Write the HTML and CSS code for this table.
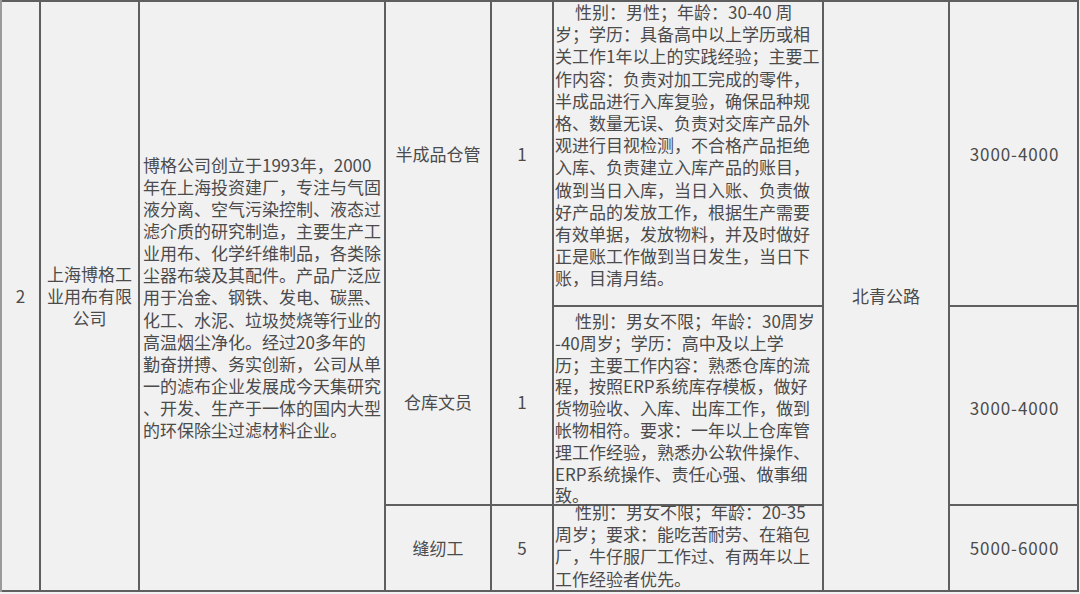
FILE: index.html
```html
<!DOCTYPE html>
<html lang="zh-CN">
<head>
<meta charset="utf-8">
<title>招聘信息</title>
<link rel="stylesheet" href="styles.css">
</head>
<body>
<div class="sheet">
  <div class="cell c-no span-all center">2</div>
  <div class="cell c-name span-all center">上海博格工<br>业用布有限<br>公司</div>
  <div class="cell c-intro span-all">
    <div class="intro">博格公司创立于1993年，2000<br>年在上海投资建厂，专注与气固<br>液分离、空气污染控制、液态过<br>滤介质的研究制造，主要生产工<br>业用布、化学纤维制品，各类除<br>尘器布袋及其配件。产品广泛应<br>用于冶金、钢铁、发电、碳黑、<br>化工、水泥、垃圾焚烧等行业的<br>高温烟尘净化。经过20多年的<br>勤奋拼搏、务实创新，公司从单<br>一的滤布企业发展成今天集研究<br>、开发、生产于一体的国内大型<br>的环保除尘过滤材料企业。</div>
  </div>

  <div class="cell c-job r1 center">半成品仓管</div>
  <div class="cell c-num r1 center">1</div>
  <div class="cell c-req r1">
    <div class="req req-1">性别：男性；年龄：30-40 周<br>岁；学历：具备高中以上学历或相<br>关工作1年以上的实践经验；主要工<br>作内容：负责对加工完成的零件，<br>半成品进行入库复验，确保品种规<br>格、数量无误、负责对交库产品外<br>观进行目视检测，不合格产品拒绝<br>入库、负责建立入库产品的账目，<br>做到当日入库，当日入账、负责做<br>好产品的发放工作，根据生产需要<br>有效单据，发放物料，并及时做好<br>正是账工作做到当日发生，当日下<br>账，目清月结。</div>
  </div>
  <div class="cell c-place span-all center">北青公路</div>
  <div class="cell c-pay r1 center">3000-4000</div>

  <div class="cell c-job r2 center job-2">仓库文员</div>
  <div class="cell c-num r2 center job-2">1</div>
  <div class="cell c-req r2">
    <div class="req req-2">性别：男女不限；年龄：30周岁<br>-40周岁；学历：高中及以上学<br>历；主要工作内容：熟悉仓库的流<br>程，按照ERP系统库存模板，做好<br>货物验收、入库、出库工作，做到<br>帐物相符。要求：一年以上仓库管<br>理工作经验，熟悉办公软件操作、<br>ERP系统操作、责任心强、做事细<br>致。</div>
  </div>
  <div class="cell c-pay r2 center pay-2">3000-4000</div>

  <div class="cell c-job r3 center">缝纫工</div>
  <div class="cell c-num r3 center">5</div>
  <div class="cell c-req r3">
    <div class="req req-3">性别：男女不限；年龄：20-35<br>周岁；要求：能吃苦耐劳、在箱包<br>厂，牛仔服厂工作过、有两年以上<br>工作经验者优先。</div>
  </div>
  <div class="cell c-pay r3 center">5000-6000</div>
</div>
</body>
</html>
```

FILE: styles.css
```css
html, body {
  margin: 0;
  padding: 0;
  background: #f2f1f2;
}

body {
  font-family: "Noto Sans CJK SC", "Liberation Sans", sans-serif;
  font-size: 17px;
  color: #4b4b4b;
  width: 1080px;
  height: 594px;
  overflow: hidden;
}

.sheet {
  display: grid;
  grid-template-columns: 37px 97px 244px 104px 60px 268px 124px 127px;
  grid-template-rows: 303px 197px 84px;
  gap: 2px;
  padding: 2px 2px 2px 0;
  border-left: 2px solid #9a9a9a;
  background: #5f5f5f;
  width: max-content;
}

.cell {
  background: #f2f1f2;
  min-width: 0;
  min-height: 0;
  display: flex;
  flex-direction: column;
  line-height: 22px;
}

.center {
  align-items: center;
  justify-content: center;
  text-align: center;
}

.span-all { grid-row: 1 / span 3; }
.r1 { grid-row: 1; }
.r2 { grid-row: 2; }
.r3 { grid-row: 3; }

.c-no { grid-column: 1; }
.c-name { grid-column: 2; line-height: 22px; }
.c-intro {
  grid-column: 3;
  justify-content: center;
  padding-left: 3px;
}
.c-job { grid-column: 4; }
.c-num { grid-column: 5; }
.c-req {
  grid-column: 6;
  justify-content: flex-start;
  padding-left: 1px;
}
.c-place { grid-column: 7; }
.c-pay {
  grid-column: 8;
  padding-left: 2px;
  letter-spacing: 0.9px;
}

.intro {
  white-space: nowrap;
  line-height: 22.1px;
  margin-top: 3px;
}

.req {
  white-space: nowrap;
  line-height: 22.2px;
  text-indent: 20px;
}

.req-1 { margin-top: -1px; }
.req-2 { margin-top: 3px; line-height: 21.8px; }
.req-3 { margin-top: -5px; }

.job-2 { margin-top: -8px; }
.pay-2 { padding-top: 4px; }
```
